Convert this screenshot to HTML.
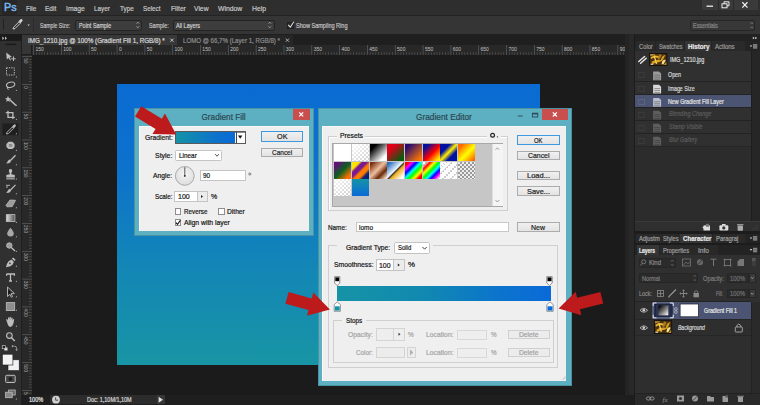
<!DOCTYPE html>
<html><head><meta charset="utf-8">
<style>
*{margin:0;padding:0;box-sizing:border-box}
html,body{width:760px;height:405px;overflow:hidden;background:#1b1b1b;font-family:"Liberation Sans",sans-serif;position:relative}
.a{position:absolute}
.t{position:absolute;white-space:nowrap;line-height:1;transform-origin:0 50%;-webkit-text-stroke:0.2px currentColor}
svg{position:absolute;overflow:visible}
</style></head><body>
<div class="a" style="left:0px;top:0px;width:760px;height:405px;background:#1b1b1b"></div>
<div class="a" style="left:0px;top:0px;width:760px;height:15px;background:#2e2e2e"></div>
<div class="a" style="left:0px;top:15px;width:760px;height:1px;background:#232323"></div>
<div class="a" style="left:1.5px;top:0px;width:15px;height:14.5px;background:#272727"></div>
<div class="t" style="left:4.00px;top:2.00px;font-size:11px;color:#78b6ec;transform:scaleX(0.974);-webkit-text-stroke:0.5px #78b6ec">Ps</div>
<div class="t" style="left:25.70px;top:5.00px;font-size:8px;color:#c9c9c9;transform:scaleX(0.799);">File</div>
<div class="t" style="left:45.40px;top:5.00px;font-size:8px;color:#c9c9c9;transform:scaleX(0.812);">Edit</div>
<div class="t" style="left:65.80px;top:5.00px;font-size:8px;color:#c9c9c9;transform:scaleX(0.846);">Image</div>
<div class="t" style="left:93.80px;top:5.00px;font-size:8px;color:#c9c9c9;transform:scaleX(0.790);">Layer</div>
<div class="t" style="left:119.50px;top:5.00px;font-size:8px;color:#c9c9c9;transform:scaleX(0.796);">Type</div>
<div class="t" style="left:142.90px;top:5.00px;font-size:8px;color:#c9c9c9;transform:scaleX(0.783);">Select</div>
<div class="t" style="left:170.50px;top:5.00px;font-size:8px;color:#c9c9c9;transform:scaleX(0.833);">Filter</div>
<div class="t" style="left:193.80px;top:5.00px;font-size:8px;color:#c9c9c9;transform:scaleX(0.843);">View</div>
<div class="t" style="left:218.20px;top:5.00px;font-size:8px;color:#c9c9c9;transform:scaleX(0.854);">Window</div>
<div class="t" style="left:252.00px;top:5.00px;font-size:8px;color:#c9c9c9;transform:scaleX(0.863);">Help</div>
<div class="a" style="left:702px;top:0px;width:16px;height:10px;background:#3a3a3a"></div>
<div class="a" style="left:718px;top:0px;width:14.5px;height:10px;background:#3a3a3a;border-left:1px solid #2a2a2a"></div>
<div class="a" style="left:732.5px;top:0px;width:25px;height:10px;background:#3a3a3a;border-left:1px solid #2a2a2a"></div>
<div class="a" style="left:0px;top:16px;width:760px;height:18px;background:#353535"></div>
<div class="a" style="left:3px;top:19px;width:1px;height:11px;background:#222"></div>
<div class="a" style="left:33px;top:18px;width:1px;height:14px;background:#2b2b2b"></div>
<div class="t" style="left:39.50px;top:22.00px;font-size:7px;color:#c4c4c4;transform:scaleX(0.732);">Sample Size:</div>
<div class="a" style="left:75px;top:19.5px;width:66.5px;height:11px;background:#3d3d3d;border:1px solid #242424;border-radius:2px"></div>
<div class="t" style="left:79.00px;top:22.00px;font-size:7px;color:#d0d0d0;transform:scaleX(0.776);">Point Sample</div>
<div class="t" style="left:148.50px;top:22.00px;font-size:7px;color:#c4c4c4;transform:scaleX(0.767);">Sample:</div>
<div class="a" style="left:172.5px;top:19.5px;width:102.5px;height:11px;background:#3d3d3d;border:1px solid #242424;border-radius:2px"></div>
<div class="t" style="left:176.00px;top:22.00px;font-size:7px;color:#d0d0d0;transform:scaleX(0.781);">All Layers</div>
<div class="a" style="left:287px;top:21.5px;width:7px;height:7px;background:#2a2a2a;border:1px solid #1f1f1f"></div>
<div class="t" style="left:296.00px;top:22.00px;font-size:7px;color:#c4c4c4;transform:scaleX(0.793);">Show Sampling Ring</div>
<svg width="760" height="405" style="left:0;top:0"><path d="M288.2 24.8 L290.3 27.2 L293.8 21.8" fill="none" stroke="#ddd" stroke-width="1.1"/><path d="M13 29 L13.6 27.2 L19 21.8 L20.4 23.2 L15 28.6 Z" fill="none" stroke="#d8d8d8" stroke-width="0.9"/><path d="M18.6 21.3 L20.3 19.6 Q21.5 18.6 22.3 19.5 Q23.1 20.4 22 21.5 L20.6 23 Z" fill="#d8d8d8"/><path d="M27.4 24.4 L29.8 24.4 L28.6 26 Z" fill="#ccc"/><path d="M136.6 23.6 L137.8 22.3 L139 23.6 M136.6 26.4 L137.8 27.7 L139 26.4" fill="none" stroke="#ccc" stroke-width="0.7"/><path d="M268.6 23.6 L269.8 22.3 L271 23.6 M268.6 26.4 L269.8 27.7 L271 26.4" fill="none" stroke="#ccc" stroke-width="0.7"/><path d="M706.5 6.2 H713" stroke="#eee" stroke-width="1.3"/><rect x="722" y="3.8" width="5" height="4" fill="none" stroke="#eee" stroke-width="1"/><path d="M724 3.8 V1.8 H729 V5.8 H727" fill="none" stroke="#eee" stroke-width="1"/><path d="M742.3 2.2 L747.5 7.6 M747.5 2.2 L742.3 7.6" stroke="#eee" stroke-width="1.3"/></svg>
<div class="a" style="left:690px;top:20.3px;width:65.3px;height:10.3px;background:#383838;border:1px solid #262626;border-radius:2px"></div>
<div class="t" style="left:692.60px;top:22.00px;font-size:7px;color:#8a8a8a;transform:scaleX(0.777);">Essentials</div>
<svg width="760" height="405" style="left:0;top:0"><path d="M750.6 23.8 L751.8 22.6 L753 23.8 M750.6 26.8 L751.8 28 L753 26.8" fill="none" stroke="#999" stroke-width="0.7"/></svg>
<div class="a" style="left:0px;top:34px;width:625px;height:11px;background:#1f1f1f"></div>
<div class="a" style="left:22px;top:34.6px;width:155px;height:10.6px;background:#383838"></div>
<div class="t" style="left:28.20px;top:38.00px;font-size:6.5px;color:#d8d8d8;transform:scaleX(0.965);">IMG_1210.jpg @ 100% (Gradient Fill 1, RGB/8) *</div>
<div class="a" style="left:177px;top:34.6px;width:116px;height:10.6px;background:#262626"></div>
<div class="t" style="left:183.00px;top:38.00px;font-size:6.5px;color:#8c8c8c;transform:scaleX(0.941);">LOMO @ 66,7% (Layer 1, RGB/8) *</div>
<svg width="760" height="405" style="left:0;top:0"><path d="M170.3 38.6 L173.5 41.8 M173.5 38.6 L170.3 41.8" stroke="#d0d0d0" stroke-width="0.9"/><path d="M285.8 38.6 L289 41.8 M289 38.6 L285.8 41.8" stroke="#c0c0c0" stroke-width="0.9"/></svg>
<div class="a" style="left:0px;top:34px;width:22px;height:371px;background:#303030"></div>
<div class="a" style="left:0px;top:34px;width:22px;height:6.7px;background:#1b1b1b"></div>
<div class="a" style="left:21px;top:40.7px;width:1px;height:364.3px;background:#1f1f1f"></div>
<svg width="22" height="405" style="left:0;top:0"><rect x="5.6" y="43.6" width="10.7" height="1.6" fill="#1c1c1c"/><path d="M2.3 36.5 L4.3 38.2 L2.3 39.9 Z M5 36.5 L7 38.2 L5 39.9 Z" fill="#bbb"/><path d="M6.2 52.5 L12 57 L9.6 57.4 L11 60 L10 60.5 L8.6 58 L6.8 59.6 Z" fill="#bdbdbd"/><path d="M13.5 56.5 V61 M11.3 58.8 H15.7" stroke="#bdbdbd" stroke-width="1"/><rect x="6.5" y="67.8" width="7.8" height="7.2" fill="none" stroke="#bdbdbd" stroke-width="1" stroke-dasharray="1.3 1.1"/><ellipse cx="10.6" cy="84.8" rx="4.2" ry="2.6" fill="none" stroke="#bdbdbd" stroke-width="1.1" transform="rotate(-15 10.6 84.8)"/><path d="M7.5 86.5 Q7 89 8.5 89.8" fill="none" stroke="#bdbdbd" stroke-width="1"/><path d="M9.5 99.5 L16 105.5" stroke="#bdbdbd" stroke-width="1.6"/><path d="M8 95.8 L8.8 98 L11 98.4 L9.3 99.8 L9.8 102 L8 100.8 L6.2 102 L6.7 99.8 L5 98.4 L7.2 98 Z" fill="#bdbdbd"/><path d="M8 110.7 V117.3 H14.8 M5.8 112.6 H12.9 V119" fill="none" stroke="#bdbdbd" stroke-width="1.3"/><rect x="2.2" y="123.3" width="16.3" height="11.9" fill="#1f1f1f" stroke="#2a2a2a" stroke-width="0.5"/><path d="M6.5 134 L7 132.3 L12.3 127 L13.6 128.3 L8.3 133.6 Z" fill="none" stroke="#bdbdbd" stroke-width="0.9"/><path d="M12 126.5 L13.6 124.9 Q14.8 123.9 15.6 124.8 Q16.4 125.7 15.3 126.8 L13.9 128.3 Z" fill="#bdbdbd"/><path d="M8.6 141.7 H12.4 L14.6 143.9 V146.9 L12.4 149.1 H8.6 L6.4 146.9 V143.9 Z" fill="#bdbdbd"/><rect x="8.8" y="144" width="3.4" height="2.8" fill="#8a8a8a"/><path d="M15.5 155.2 L10.5 160.5" stroke="#bdbdbd" stroke-width="1.3"/><path d="M10.8 160.2 Q9.8 159 8.4 160.2 Q7.6 161.5 6.2 163.6 Q9.2 163.5 10.2 162.4 Q11.3 161.3 10.8 160.2 Z" fill="#bdbdbd"/><path d="M9 169.5 Q10.5 168.5 12 169.5 Q12.6 171.5 11.3 173.2 L11.3 174.3 L14.8 175 L14.8 177.5 L6.3 177.5 L6.3 175 L9.7 174.3 L9.7 173.2 Q8.4 171.5 9 169.5 Z" fill="#bdbdbd"/><rect x="6.3" y="178.3" width="8.5" height="1.1" fill="#bdbdbd"/><path d="M6 185.3 H10 M6 187 H8" stroke="#bdbdbd" stroke-width="0.9"/><path d="M15.5 184.8 L10.5 190" stroke="#bdbdbd" stroke-width="1.2"/><path d="M10.8 189.7 Q9.8 188.5 8.4 189.7 Q7.6 191 6.2 193 Q9.2 193 10.2 191.9 Q11.3 190.8 10.8 189.7 Z" fill="#bdbdbd"/><path d="M6 205.3 L10 200 L15.5 200.3 L12.2 206.6 L7 206.8 Z" fill="#9c9c9c" stroke="#bdbdbd" stroke-width="0.8"/><defs><linearGradient id="tg" x1="0" x2="1"><stop offset="0" stop-color="#e0e0e0"/><stop offset="1" stop-color="#505050"/></linearGradient></defs><rect x="6.3" y="214.6" width="8.6" height="7" fill="url(#tg)" stroke="#bdbdbd" stroke-width="0.8"/><path d="M10.5 227.8 Q13.8 231.8 13.8 233.6 Q13.8 236.6 10.5 236.6 Q7.2 236.6 7.2 233.6 Q7.2 231.8 10.5 227.8 Z" fill="#a8a8a8"/><circle cx="9.3" cy="245.5" r="2.7" fill="#9c9c9c" stroke="#bdbdbd" stroke-width="0.9"/><path d="M11.3 247.5 L15 251" stroke="#bdbdbd" stroke-width="1.3"/><path d="M6 267.3 Q6.6 263.5 8.6 261.2 L11.6 259.6 L13.9 261.9 L12.3 264.9 Q10 266.9 6 267.3 Z" fill="#bdbdbd"/><circle cx="9.9" cy="263.4" r="0.8" fill="#333"/><path d="M11.9 258.4 L13.2 257.4 L15.6 259.8 L14.6 261.1 Z" fill="#bdbdbd"/><path d="M6.6 274 H14.4 V275.8 M6.6 274 V275.8 M10.5 274 V281 M9 281 H12" fill="none" stroke="#bdbdbd" stroke-width="1.3"/><path d="M7.5 287 L7.5 296.5 L9.8 294.3 L11.3 297.2 L12.6 296.6 L11.1 293.7 L14.4 293.5 Z" fill="#2e2e2e" stroke="#bdbdbd" stroke-width="0.9"/><path d="M8.5 290 L8.5 294.5 L10.5 292.5" fill="#111"/><rect x="6.3" y="302.6" width="8.4" height="8" fill="#8e8e8e" stroke="#bdbdbd" stroke-width="0.8"/><path d="M7 322 L6.2 319.7 Q6.3 318.8 7.3 319.3 L8 320.5 L8 317.8 Q8.6 316.9 9.2 317.8 L9.3 320 L9.6 317.2 Q10.3 316.4 10.9 317.3 L10.9 320 L11.4 317.8 Q12 317.1 12.6 317.9 L12.5 320.6 L13 319.2 Q13.8 318.6 14.2 319.4 L13.4 323.6 Q12.7 326.6 10.3 327 Q8.2 326.8 7 322 Z" fill="#bdbdbd"/><circle cx="9.4" cy="335.6" r="2.8" fill="#3a3a3a" stroke="#bdbdbd" stroke-width="1.1"/><path d="M11.5 337.7 L14.8 341" stroke="#bdbdbd" stroke-width="1.5"/><rect x="4.3" y="347.5" width="3.2" height="3" fill="#ddd"/><rect x="2.2" y="345.7" width="3.2" height="3" fill="#222" stroke="#ddd" stroke-width="0.6"/><path d="M12.3 346.2 H14.8 Q16.6 346.2 16.6 348.3 V350.2 M11.8 346.2 L13 345.2 M11.8 346.2 L13 347.2 M16.6 350.6 L15.6 349.4 M16.6 350.6 L17.6 349.4" fill="none" stroke="#bdbdbd" stroke-width="0.7"/><rect x="8" y="359.8" width="11.2" height="10.8" fill="#f2f2f2" stroke="#1a1a1a" stroke-width="0.6"/><rect x="2.3" y="354.2" width="10.6" height="10.8" fill="#f4f4f4" stroke="#1a1a1a" stroke-width="0.6"/><rect x="5.6" y="375.3" width="9.6" height="7.2" rx="1" fill="#444" stroke="#bdbdbd" stroke-width="1"/><circle cx="10.4" cy="378.9" r="1.9" fill="#1d1d1d"/><rect x="8.6" y="390" width="6.6" height="5" fill="#666" stroke="#bdbdbd" stroke-width="0.8"/><rect x="5.6" y="392.2" width="6.6" height="5.5" fill="#888" stroke="#bdbdbd" stroke-width="0.8"/><path d="M15.5 77.5 L17 76.0 L17 77.5 Z" fill="#aaa"/><path d="M15.5 91 L17 89.5 L17 91 Z" fill="#aaa"/><path d="M15.5 106 L17 104.5 L17 106 Z" fill="#aaa"/><path d="M15.5 120 L17 118.5 L17 120 Z" fill="#aaa"/><path d="M15.5 134.2 L17 132.7 L17 134.2 Z" fill="#aaa"/><path d="M15.5 151 L17 149.5 L17 151 Z" fill="#aaa"/><path d="M15.5 165.3 L17 163.8 L17 165.3 Z" fill="#aaa"/><path d="M15.5 179.4 L17 177.9 L17 179.4 Z" fill="#aaa"/><path d="M15.5 194.2 L17 192.7 L17 194.2 Z" fill="#aaa"/><path d="M15.5 208.3 L17 206.8 L17 208.3 Z" fill="#aaa"/><path d="M15.5 223 L17 221.5 L17 223 Z" fill="#aaa"/><path d="M15.5 237.2 L17 235.7 L17 237.2 Z" fill="#aaa"/><path d="M15.5 252 L17 250.5 L17 252 Z" fill="#aaa"/><path d="M15.5 266.8 L17 265.3 L17 266.8 Z" fill="#aaa"/><path d="M15.5 282.1 L17 280.6 L17 282.1 Z" fill="#aaa"/><path d="M15.5 297.2 L17 295.7 L17 297.2 Z" fill="#aaa"/><path d="M15.5 310.8 L17 309.3 L17 310.8 Z" fill="#aaa"/><path d="M15.5 326.8 L17 325.3 L17 326.8 Z" fill="#aaa"/><path d="M15.5 399.5 L17 398.0 L17 399.5 Z" fill="#aaa"/></svg>
<div class="a" style="left:32px;top:45px;width:593px;height:10px;background:#282828"></div>
<div class="a" style="left:22px;top:45px;width:10px;height:10px;background:#363636;border-right:1px solid #1e1e1e;border-bottom:1px solid #1e1e1e"></div>
<div class="a" style="left:22px;top:55px;width:10px;height:340px;background:#282828"></div>
<svg width="760" height="405" style="left:0;top:0"><defs><clipPath id="hrc"><rect x="32" y="45" width="593" height="10"/></clipPath><clipPath id="vrc"><rect x="22" y="55" width="10" height="340"/></clipPath></defs><g clip-path="url(#hrc)"><rect x="30.46" y="52.2" width="0.7" height="2.6" fill="#555"/><rect x="33.24" y="45" width="0.7" height="10" fill="#5e5e5e"/><rect x="36.02" y="52.2" width="0.7" height="2.6" fill="#555"/><rect x="38.80" y="52.2" width="0.7" height="2.6" fill="#555"/><rect x="41.59" y="52.2" width="0.7" height="2.6" fill="#555"/><rect x="44.37" y="52.2" width="0.7" height="2.6" fill="#555"/><rect x="47.15" y="52.2" width="0.7" height="2.6" fill="#555"/><rect x="49.93" y="52.2" width="0.7" height="2.6" fill="#555"/><rect x="52.71" y="52.2" width="0.7" height="2.6" fill="#555"/><rect x="55.50" y="52.2" width="0.7" height="2.6" fill="#555"/><rect x="58.28" y="52.2" width="0.7" height="2.6" fill="#555"/><text x="35.44" y="51" font-size="5" fill="#c4c4c4" font-family="Liberation Sans">150</text><rect x="61.06" y="45" width="0.7" height="10" fill="#5e5e5e"/><rect x="63.84" y="52.2" width="0.7" height="2.6" fill="#555"/><rect x="66.62" y="52.2" width="0.7" height="2.6" fill="#555"/><rect x="69.41" y="52.2" width="0.7" height="2.6" fill="#555"/><rect x="72.19" y="52.2" width="0.7" height="2.6" fill="#555"/><rect x="74.97" y="52.2" width="0.7" height="2.6" fill="#555"/><rect x="77.75" y="52.2" width="0.7" height="2.6" fill="#555"/><rect x="80.53" y="52.2" width="0.7" height="2.6" fill="#555"/><rect x="83.32" y="52.2" width="0.7" height="2.6" fill="#555"/><rect x="86.10" y="52.2" width="0.7" height="2.6" fill="#555"/><text x="63.26" y="51" font-size="5" fill="#c4c4c4" font-family="Liberation Sans">100</text><rect x="88.88" y="45" width="0.7" height="10" fill="#5e5e5e"/><rect x="91.66" y="52.2" width="0.7" height="2.6" fill="#555"/><rect x="94.44" y="52.2" width="0.7" height="2.6" fill="#555"/><rect x="97.23" y="52.2" width="0.7" height="2.6" fill="#555"/><rect x="100.01" y="52.2" width="0.7" height="2.6" fill="#555"/><rect x="102.79" y="52.2" width="0.7" height="2.6" fill="#555"/><rect x="105.57" y="52.2" width="0.7" height="2.6" fill="#555"/><rect x="108.35" y="52.2" width="0.7" height="2.6" fill="#555"/><rect x="111.14" y="52.2" width="0.7" height="2.6" fill="#555"/><rect x="113.92" y="52.2" width="0.7" height="2.6" fill="#555"/><text x="91.08" y="51" font-size="5" fill="#c4c4c4" font-family="Liberation Sans">50</text><rect x="116.70" y="45" width="0.7" height="10" fill="#5e5e5e"/><rect x="119.48" y="52.2" width="0.7" height="2.6" fill="#555"/><rect x="122.26" y="52.2" width="0.7" height="2.6" fill="#555"/><rect x="125.05" y="52.2" width="0.7" height="2.6" fill="#555"/><rect x="127.83" y="52.2" width="0.7" height="2.6" fill="#555"/><rect x="130.61" y="52.2" width="0.7" height="2.6" fill="#555"/><rect x="133.39" y="52.2" width="0.7" height="2.6" fill="#555"/><rect x="136.17" y="52.2" width="0.7" height="2.6" fill="#555"/><rect x="138.96" y="52.2" width="0.7" height="2.6" fill="#555"/><rect x="141.74" y="52.2" width="0.7" height="2.6" fill="#555"/><text x="118.90" y="51" font-size="5" fill="#c4c4c4" font-family="Liberation Sans">0</text><rect x="144.52" y="45" width="0.7" height="10" fill="#5e5e5e"/><rect x="147.30" y="52.2" width="0.7" height="2.6" fill="#555"/><rect x="150.08" y="52.2" width="0.7" height="2.6" fill="#555"/><rect x="152.87" y="52.2" width="0.7" height="2.6" fill="#555"/><rect x="155.65" y="52.2" width="0.7" height="2.6" fill="#555"/><rect x="158.43" y="52.2" width="0.7" height="2.6" fill="#555"/><rect x="161.21" y="52.2" width="0.7" height="2.6" fill="#555"/><rect x="163.99" y="52.2" width="0.7" height="2.6" fill="#555"/><rect x="166.78" y="52.2" width="0.7" height="2.6" fill="#555"/><rect x="169.56" y="52.2" width="0.7" height="2.6" fill="#555"/><text x="146.72" y="51" font-size="5" fill="#c4c4c4" font-family="Liberation Sans">50</text><rect x="172.34" y="45" width="0.7" height="10" fill="#5e5e5e"/><rect x="175.12" y="52.2" width="0.7" height="2.6" fill="#555"/><rect x="177.90" y="52.2" width="0.7" height="2.6" fill="#555"/><rect x="180.69" y="52.2" width="0.7" height="2.6" fill="#555"/><rect x="183.47" y="52.2" width="0.7" height="2.6" fill="#555"/><rect x="186.25" y="52.2" width="0.7" height="2.6" fill="#555"/><rect x="189.03" y="52.2" width="0.7" height="2.6" fill="#555"/><rect x="191.81" y="52.2" width="0.7" height="2.6" fill="#555"/><rect x="194.60" y="52.2" width="0.7" height="2.6" fill="#555"/><rect x="197.38" y="52.2" width="0.7" height="2.6" fill="#555"/><text x="174.54" y="51" font-size="5" fill="#c4c4c4" font-family="Liberation Sans">100</text><rect x="200.16" y="45" width="0.7" height="10" fill="#5e5e5e"/><rect x="202.94" y="52.2" width="0.7" height="2.6" fill="#555"/><rect x="205.72" y="52.2" width="0.7" height="2.6" fill="#555"/><rect x="208.51" y="52.2" width="0.7" height="2.6" fill="#555"/><rect x="211.29" y="52.2" width="0.7" height="2.6" fill="#555"/><rect x="214.07" y="52.2" width="0.7" height="2.6" fill="#555"/><rect x="216.85" y="52.2" width="0.7" height="2.6" fill="#555"/><rect x="219.63" y="52.2" width="0.7" height="2.6" fill="#555"/><rect x="222.42" y="52.2" width="0.7" height="2.6" fill="#555"/><rect x="225.20" y="52.2" width="0.7" height="2.6" fill="#555"/><text x="202.36" y="51" font-size="5" fill="#c4c4c4" font-family="Liberation Sans">150</text><rect x="227.98" y="45" width="0.7" height="10" fill="#5e5e5e"/><rect x="230.76" y="52.2" width="0.7" height="2.6" fill="#555"/><rect x="233.54" y="52.2" width="0.7" height="2.6" fill="#555"/><rect x="236.33" y="52.2" width="0.7" height="2.6" fill="#555"/><rect x="239.11" y="52.2" width="0.7" height="2.6" fill="#555"/><rect x="241.89" y="52.2" width="0.7" height="2.6" fill="#555"/><rect x="244.67" y="52.2" width="0.7" height="2.6" fill="#555"/><rect x="247.45" y="52.2" width="0.7" height="2.6" fill="#555"/><rect x="250.24" y="52.2" width="0.7" height="2.6" fill="#555"/><rect x="253.02" y="52.2" width="0.7" height="2.6" fill="#555"/><text x="230.18" y="51" font-size="5" fill="#c4c4c4" font-family="Liberation Sans">200</text><rect x="255.80" y="45" width="0.7" height="10" fill="#5e5e5e"/><rect x="258.58" y="52.2" width="0.7" height="2.6" fill="#555"/><rect x="261.36" y="52.2" width="0.7" height="2.6" fill="#555"/><rect x="264.15" y="52.2" width="0.7" height="2.6" fill="#555"/><rect x="266.93" y="52.2" width="0.7" height="2.6" fill="#555"/><rect x="269.71" y="52.2" width="0.7" height="2.6" fill="#555"/><rect x="272.49" y="52.2" width="0.7" height="2.6" fill="#555"/><rect x="275.27" y="52.2" width="0.7" height="2.6" fill="#555"/><rect x="278.06" y="52.2" width="0.7" height="2.6" fill="#555"/><rect x="280.84" y="52.2" width="0.7" height="2.6" fill="#555"/><text x="258.00" y="51" font-size="5" fill="#c4c4c4" font-family="Liberation Sans">250</text><rect x="283.62" y="45" width="0.7" height="10" fill="#5e5e5e"/><rect x="286.40" y="52.2" width="0.7" height="2.6" fill="#555"/><rect x="289.18" y="52.2" width="0.7" height="2.6" fill="#555"/><rect x="291.97" y="52.2" width="0.7" height="2.6" fill="#555"/><rect x="294.75" y="52.2" width="0.7" height="2.6" fill="#555"/><rect x="297.53" y="52.2" width="0.7" height="2.6" fill="#555"/><rect x="300.31" y="52.2" width="0.7" height="2.6" fill="#555"/><rect x="303.09" y="52.2" width="0.7" height="2.6" fill="#555"/><rect x="305.88" y="52.2" width="0.7" height="2.6" fill="#555"/><rect x="308.66" y="52.2" width="0.7" height="2.6" fill="#555"/><text x="285.82" y="51" font-size="5" fill="#c4c4c4" font-family="Liberation Sans">300</text><rect x="311.44" y="45" width="0.7" height="10" fill="#5e5e5e"/><rect x="314.22" y="52.2" width="0.7" height="2.6" fill="#555"/><rect x="317.00" y="52.2" width="0.7" height="2.6" fill="#555"/><rect x="319.79" y="52.2" width="0.7" height="2.6" fill="#555"/><rect x="322.57" y="52.2" width="0.7" height="2.6" fill="#555"/><rect x="325.35" y="52.2" width="0.7" height="2.6" fill="#555"/><rect x="328.13" y="52.2" width="0.7" height="2.6" fill="#555"/><rect x="330.91" y="52.2" width="0.7" height="2.6" fill="#555"/><rect x="333.70" y="52.2" width="0.7" height="2.6" fill="#555"/><rect x="336.48" y="52.2" width="0.7" height="2.6" fill="#555"/><text x="313.64" y="51" font-size="5" fill="#c4c4c4" font-family="Liberation Sans">350</text><rect x="339.26" y="45" width="0.7" height="10" fill="#5e5e5e"/><rect x="342.04" y="52.2" width="0.7" height="2.6" fill="#555"/><rect x="344.82" y="52.2" width="0.7" height="2.6" fill="#555"/><rect x="347.61" y="52.2" width="0.7" height="2.6" fill="#555"/><rect x="350.39" y="52.2" width="0.7" height="2.6" fill="#555"/><rect x="353.17" y="52.2" width="0.7" height="2.6" fill="#555"/><rect x="355.95" y="52.2" width="0.7" height="2.6" fill="#555"/><rect x="358.73" y="52.2" width="0.7" height="2.6" fill="#555"/><rect x="361.52" y="52.2" width="0.7" height="2.6" fill="#555"/><rect x="364.30" y="52.2" width="0.7" height="2.6" fill="#555"/><text x="341.46" y="51" font-size="5" fill="#c4c4c4" font-family="Liberation Sans">400</text><rect x="367.08" y="45" width="0.7" height="10" fill="#5e5e5e"/><rect x="369.86" y="52.2" width="0.7" height="2.6" fill="#555"/><rect x="372.64" y="52.2" width="0.7" height="2.6" fill="#555"/><rect x="375.43" y="52.2" width="0.7" height="2.6" fill="#555"/><rect x="378.21" y="52.2" width="0.7" height="2.6" fill="#555"/><rect x="380.99" y="52.2" width="0.7" height="2.6" fill="#555"/><rect x="383.77" y="52.2" width="0.7" height="2.6" fill="#555"/><rect x="386.55" y="52.2" width="0.7" height="2.6" fill="#555"/><rect x="389.34" y="52.2" width="0.7" height="2.6" fill="#555"/><rect x="392.12" y="52.2" width="0.7" height="2.6" fill="#555"/><text x="369.28" y="51" font-size="5" fill="#c4c4c4" font-family="Liberation Sans">450</text><rect x="394.90" y="45" width="0.7" height="10" fill="#5e5e5e"/><rect x="397.68" y="52.2" width="0.7" height="2.6" fill="#555"/><rect x="400.46" y="52.2" width="0.7" height="2.6" fill="#555"/><rect x="403.25" y="52.2" width="0.7" height="2.6" fill="#555"/><rect x="406.03" y="52.2" width="0.7" height="2.6" fill="#555"/><rect x="408.81" y="52.2" width="0.7" height="2.6" fill="#555"/><rect x="411.59" y="52.2" width="0.7" height="2.6" fill="#555"/><rect x="414.37" y="52.2" width="0.7" height="2.6" fill="#555"/><rect x="417.16" y="52.2" width="0.7" height="2.6" fill="#555"/><rect x="419.94" y="52.2" width="0.7" height="2.6" fill="#555"/><text x="397.10" y="51" font-size="5" fill="#c4c4c4" font-family="Liberation Sans">500</text><rect x="422.72" y="45" width="0.7" height="10" fill="#5e5e5e"/><rect x="425.50" y="52.2" width="0.7" height="2.6" fill="#555"/><rect x="428.28" y="52.2" width="0.7" height="2.6" fill="#555"/><rect x="431.07" y="52.2" width="0.7" height="2.6" fill="#555"/><rect x="433.85" y="52.2" width="0.7" height="2.6" fill="#555"/><rect x="436.63" y="52.2" width="0.7" height="2.6" fill="#555"/><rect x="439.41" y="52.2" width="0.7" height="2.6" fill="#555"/><rect x="442.19" y="52.2" width="0.7" height="2.6" fill="#555"/><rect x="444.98" y="52.2" width="0.7" height="2.6" fill="#555"/><rect x="447.76" y="52.2" width="0.7" height="2.6" fill="#555"/><text x="424.92" y="51" font-size="5" fill="#c4c4c4" font-family="Liberation Sans">550</text><rect x="450.54" y="45" width="0.7" height="10" fill="#5e5e5e"/><rect x="453.32" y="52.2" width="0.7" height="2.6" fill="#555"/><rect x="456.10" y="52.2" width="0.7" height="2.6" fill="#555"/><rect x="458.89" y="52.2" width="0.7" height="2.6" fill="#555"/><rect x="461.67" y="52.2" width="0.7" height="2.6" fill="#555"/><rect x="464.45" y="52.2" width="0.7" height="2.6" fill="#555"/><rect x="467.23" y="52.2" width="0.7" height="2.6" fill="#555"/><rect x="470.01" y="52.2" width="0.7" height="2.6" fill="#555"/><rect x="472.80" y="52.2" width="0.7" height="2.6" fill="#555"/><rect x="475.58" y="52.2" width="0.7" height="2.6" fill="#555"/><text x="452.74" y="51" font-size="5" fill="#c4c4c4" font-family="Liberation Sans">600</text><rect x="478.36" y="45" width="0.7" height="10" fill="#5e5e5e"/><rect x="481.14" y="52.2" width="0.7" height="2.6" fill="#555"/><rect x="483.92" y="52.2" width="0.7" height="2.6" fill="#555"/><rect x="486.71" y="52.2" width="0.7" height="2.6" fill="#555"/><rect x="489.49" y="52.2" width="0.7" height="2.6" fill="#555"/><rect x="492.27" y="52.2" width="0.7" height="2.6" fill="#555"/><rect x="495.05" y="52.2" width="0.7" height="2.6" fill="#555"/><rect x="497.83" y="52.2" width="0.7" height="2.6" fill="#555"/><rect x="500.62" y="52.2" width="0.7" height="2.6" fill="#555"/><rect x="503.40" y="52.2" width="0.7" height="2.6" fill="#555"/><text x="480.56" y="51" font-size="5" fill="#c4c4c4" font-family="Liberation Sans">650</text><rect x="506.18" y="45" width="0.7" height="10" fill="#5e5e5e"/><rect x="508.96" y="52.2" width="0.7" height="2.6" fill="#555"/><rect x="511.74" y="52.2" width="0.7" height="2.6" fill="#555"/><rect x="514.53" y="52.2" width="0.7" height="2.6" fill="#555"/><rect x="517.31" y="52.2" width="0.7" height="2.6" fill="#555"/><rect x="520.09" y="52.2" width="0.7" height="2.6" fill="#555"/><rect x="522.87" y="52.2" width="0.7" height="2.6" fill="#555"/><rect x="525.65" y="52.2" width="0.7" height="2.6" fill="#555"/><rect x="528.44" y="52.2" width="0.7" height="2.6" fill="#555"/><rect x="531.22" y="52.2" width="0.7" height="2.6" fill="#555"/><text x="508.38" y="51" font-size="5" fill="#c4c4c4" font-family="Liberation Sans">700</text><rect x="534.00" y="45" width="0.7" height="10" fill="#5e5e5e"/><rect x="536.78" y="52.2" width="0.7" height="2.6" fill="#555"/><rect x="539.56" y="52.2" width="0.7" height="2.6" fill="#555"/><rect x="542.35" y="52.2" width="0.7" height="2.6" fill="#555"/><rect x="545.13" y="52.2" width="0.7" height="2.6" fill="#555"/><rect x="547.91" y="52.2" width="0.7" height="2.6" fill="#555"/><rect x="550.69" y="52.2" width="0.7" height="2.6" fill="#555"/><rect x="553.47" y="52.2" width="0.7" height="2.6" fill="#555"/><rect x="556.26" y="52.2" width="0.7" height="2.6" fill="#555"/><rect x="559.04" y="52.2" width="0.7" height="2.6" fill="#555"/><text x="536.20" y="51" font-size="5" fill="#c4c4c4" font-family="Liberation Sans">750</text><rect x="561.82" y="45" width="0.7" height="10" fill="#5e5e5e"/><rect x="564.60" y="52.2" width="0.7" height="2.6" fill="#555"/><rect x="567.38" y="52.2" width="0.7" height="2.6" fill="#555"/><rect x="570.17" y="52.2" width="0.7" height="2.6" fill="#555"/><rect x="572.95" y="52.2" width="0.7" height="2.6" fill="#555"/><rect x="575.73" y="52.2" width="0.7" height="2.6" fill="#555"/><rect x="578.51" y="52.2" width="0.7" height="2.6" fill="#555"/><rect x="581.29" y="52.2" width="0.7" height="2.6" fill="#555"/><rect x="584.08" y="52.2" width="0.7" height="2.6" fill="#555"/><rect x="586.86" y="52.2" width="0.7" height="2.6" fill="#555"/><text x="564.02" y="51" font-size="5" fill="#c4c4c4" font-family="Liberation Sans">800</text><rect x="589.64" y="45" width="0.7" height="10" fill="#5e5e5e"/><rect x="592.42" y="52.2" width="0.7" height="2.6" fill="#555"/><rect x="595.20" y="52.2" width="0.7" height="2.6" fill="#555"/><rect x="597.99" y="52.2" width="0.7" height="2.6" fill="#555"/><rect x="600.77" y="52.2" width="0.7" height="2.6" fill="#555"/><rect x="603.55" y="52.2" width="0.7" height="2.6" fill="#555"/><rect x="606.33" y="52.2" width="0.7" height="2.6" fill="#555"/><rect x="609.11" y="52.2" width="0.7" height="2.6" fill="#555"/><rect x="611.90" y="52.2" width="0.7" height="2.6" fill="#555"/><rect x="614.68" y="52.2" width="0.7" height="2.6" fill="#555"/><text x="591.84" y="51" font-size="5" fill="#c4c4c4" font-family="Liberation Sans">850</text><rect x="617.46" y="45" width="0.7" height="10" fill="#5e5e5e"/><rect x="620.24" y="52.2" width="0.7" height="2.6" fill="#555"/><rect x="623.02" y="52.2" width="0.7" height="2.6" fill="#555"/><rect x="625.81" y="52.2" width="0.7" height="2.6" fill="#555"/><text x="619.66" y="51" font-size="5" fill="#c4c4c4" font-family="Liberation Sans">900</text></g><g clip-path="url(#vrc)"><rect x="22" y="56.18" width="10" height="0.7" fill="#5e5e5e"/><rect x="29" y="58.96" width="2.6" height="0.7" fill="#555"/><rect x="29" y="61.74" width="2.6" height="0.7" fill="#555"/><rect x="29" y="64.53" width="2.6" height="0.7" fill="#555"/><rect x="29" y="67.31" width="2.6" height="0.7" fill="#555"/><rect x="29" y="70.09" width="2.6" height="0.7" fill="#555"/><rect x="29" y="72.87" width="2.6" height="0.7" fill="#555"/><rect x="29" y="75.65" width="2.6" height="0.7" fill="#555"/><rect x="29" y="78.44" width="2.6" height="0.7" fill="#555"/><rect x="29" y="81.22" width="2.6" height="0.7" fill="#555"/><text transform="translate(24.2 58.18) rotate(90)" font-size="4.8" fill="#a8a8a8" font-family="Liberation Sans">50</text><rect x="22" y="84.00" width="10" height="0.7" fill="#5e5e5e"/><rect x="29" y="86.78" width="2.6" height="0.7" fill="#555"/><rect x="29" y="89.56" width="2.6" height="0.7" fill="#555"/><rect x="29" y="92.35" width="2.6" height="0.7" fill="#555"/><rect x="29" y="95.13" width="2.6" height="0.7" fill="#555"/><rect x="29" y="97.91" width="2.6" height="0.7" fill="#555"/><rect x="29" y="100.69" width="2.6" height="0.7" fill="#555"/><rect x="29" y="103.47" width="2.6" height="0.7" fill="#555"/><rect x="29" y="106.26" width="2.6" height="0.7" fill="#555"/><rect x="29" y="109.04" width="2.6" height="0.7" fill="#555"/><text transform="translate(24.2 86.00) rotate(90)" font-size="4.8" fill="#a8a8a8" font-family="Liberation Sans">0</text><rect x="22" y="111.82" width="10" height="0.7" fill="#5e5e5e"/><rect x="29" y="114.60" width="2.6" height="0.7" fill="#555"/><rect x="29" y="117.38" width="2.6" height="0.7" fill="#555"/><rect x="29" y="120.17" width="2.6" height="0.7" fill="#555"/><rect x="29" y="122.95" width="2.6" height="0.7" fill="#555"/><rect x="29" y="125.73" width="2.6" height="0.7" fill="#555"/><rect x="29" y="128.51" width="2.6" height="0.7" fill="#555"/><rect x="29" y="131.29" width="2.6" height="0.7" fill="#555"/><rect x="29" y="134.08" width="2.6" height="0.7" fill="#555"/><rect x="29" y="136.86" width="2.6" height="0.7" fill="#555"/><text transform="translate(24.2 113.82) rotate(90)" font-size="4.8" fill="#a8a8a8" font-family="Liberation Sans">50</text><rect x="22" y="139.64" width="10" height="0.7" fill="#5e5e5e"/><rect x="29" y="142.42" width="2.6" height="0.7" fill="#555"/><rect x="29" y="145.20" width="2.6" height="0.7" fill="#555"/><rect x="29" y="147.99" width="2.6" height="0.7" fill="#555"/><rect x="29" y="150.77" width="2.6" height="0.7" fill="#555"/><rect x="29" y="153.55" width="2.6" height="0.7" fill="#555"/><rect x="29" y="156.33" width="2.6" height="0.7" fill="#555"/><rect x="29" y="159.11" width="2.6" height="0.7" fill="#555"/><rect x="29" y="161.90" width="2.6" height="0.7" fill="#555"/><rect x="29" y="164.68" width="2.6" height="0.7" fill="#555"/><text transform="translate(24.2 141.64) rotate(90)" font-size="4.8" fill="#a8a8a8" font-family="Liberation Sans">100</text><rect x="22" y="167.46" width="10" height="0.7" fill="#5e5e5e"/><rect x="29" y="170.24" width="2.6" height="0.7" fill="#555"/><rect x="29" y="173.02" width="2.6" height="0.7" fill="#555"/><rect x="29" y="175.81" width="2.6" height="0.7" fill="#555"/><rect x="29" y="178.59" width="2.6" height="0.7" fill="#555"/><rect x="29" y="181.37" width="2.6" height="0.7" fill="#555"/><rect x="29" y="184.15" width="2.6" height="0.7" fill="#555"/><rect x="29" y="186.93" width="2.6" height="0.7" fill="#555"/><rect x="29" y="189.72" width="2.6" height="0.7" fill="#555"/><rect x="29" y="192.50" width="2.6" height="0.7" fill="#555"/><text transform="translate(24.2 169.46) rotate(90)" font-size="4.8" fill="#a8a8a8" font-family="Liberation Sans">150</text><rect x="22" y="195.28" width="10" height="0.7" fill="#5e5e5e"/><rect x="29" y="198.06" width="2.6" height="0.7" fill="#555"/><rect x="29" y="200.84" width="2.6" height="0.7" fill="#555"/><rect x="29" y="203.63" width="2.6" height="0.7" fill="#555"/><rect x="29" y="206.41" width="2.6" height="0.7" fill="#555"/><rect x="29" y="209.19" width="2.6" height="0.7" fill="#555"/><rect x="29" y="211.97" width="2.6" height="0.7" fill="#555"/><rect x="29" y="214.75" width="2.6" height="0.7" fill="#555"/><rect x="29" y="217.54" width="2.6" height="0.7" fill="#555"/><rect x="29" y="220.32" width="2.6" height="0.7" fill="#555"/><text transform="translate(24.2 197.28) rotate(90)" font-size="4.8" fill="#a8a8a8" font-family="Liberation Sans">200</text><rect x="22" y="223.10" width="10" height="0.7" fill="#5e5e5e"/><rect x="29" y="225.88" width="2.6" height="0.7" fill="#555"/><rect x="29" y="228.66" width="2.6" height="0.7" fill="#555"/><rect x="29" y="231.45" width="2.6" height="0.7" fill="#555"/><rect x="29" y="234.23" width="2.6" height="0.7" fill="#555"/><rect x="29" y="237.01" width="2.6" height="0.7" fill="#555"/><rect x="29" y="239.79" width="2.6" height="0.7" fill="#555"/><rect x="29" y="242.57" width="2.6" height="0.7" fill="#555"/><rect x="29" y="245.36" width="2.6" height="0.7" fill="#555"/><rect x="29" y="248.14" width="2.6" height="0.7" fill="#555"/><text transform="translate(24.2 225.10) rotate(90)" font-size="4.8" fill="#a8a8a8" font-family="Liberation Sans">250</text><rect x="22" y="250.92" width="10" height="0.7" fill="#5e5e5e"/><rect x="29" y="253.70" width="2.6" height="0.7" fill="#555"/><rect x="29" y="256.48" width="2.6" height="0.7" fill="#555"/><rect x="29" y="259.27" width="2.6" height="0.7" fill="#555"/><rect x="29" y="262.05" width="2.6" height="0.7" fill="#555"/><rect x="29" y="264.83" width="2.6" height="0.7" fill="#555"/><rect x="29" y="267.61" width="2.6" height="0.7" fill="#555"/><rect x="29" y="270.39" width="2.6" height="0.7" fill="#555"/><rect x="29" y="273.18" width="2.6" height="0.7" fill="#555"/><rect x="29" y="275.96" width="2.6" height="0.7" fill="#555"/><text transform="translate(24.2 252.92) rotate(90)" font-size="4.8" fill="#a8a8a8" font-family="Liberation Sans">300</text><rect x="22" y="278.74" width="10" height="0.7" fill="#5e5e5e"/><rect x="29" y="281.52" width="2.6" height="0.7" fill="#555"/><rect x="29" y="284.30" width="2.6" height="0.7" fill="#555"/><rect x="29" y="287.09" width="2.6" height="0.7" fill="#555"/><rect x="29" y="289.87" width="2.6" height="0.7" fill="#555"/><rect x="29" y="292.65" width="2.6" height="0.7" fill="#555"/><rect x="29" y="295.43" width="2.6" height="0.7" fill="#555"/><rect x="29" y="298.21" width="2.6" height="0.7" fill="#555"/><rect x="29" y="301.00" width="2.6" height="0.7" fill="#555"/><rect x="29" y="303.78" width="2.6" height="0.7" fill="#555"/><text transform="translate(24.2 280.74) rotate(90)" font-size="4.8" fill="#a8a8a8" font-family="Liberation Sans">350</text><rect x="22" y="306.56" width="10" height="0.7" fill="#5e5e5e"/><rect x="29" y="309.34" width="2.6" height="0.7" fill="#555"/><rect x="29" y="312.12" width="2.6" height="0.7" fill="#555"/><rect x="29" y="314.91" width="2.6" height="0.7" fill="#555"/><rect x="29" y="317.69" width="2.6" height="0.7" fill="#555"/><rect x="29" y="320.47" width="2.6" height="0.7" fill="#555"/><rect x="29" y="323.25" width="2.6" height="0.7" fill="#555"/><rect x="29" y="326.03" width="2.6" height="0.7" fill="#555"/><rect x="29" y="328.82" width="2.6" height="0.7" fill="#555"/><rect x="29" y="331.60" width="2.6" height="0.7" fill="#555"/><text transform="translate(24.2 308.56) rotate(90)" font-size="4.8" fill="#a8a8a8" font-family="Liberation Sans">400</text><rect x="22" y="334.38" width="10" height="0.7" fill="#5e5e5e"/><rect x="29" y="337.16" width="2.6" height="0.7" fill="#555"/><rect x="29" y="339.94" width="2.6" height="0.7" fill="#555"/><rect x="29" y="342.73" width="2.6" height="0.7" fill="#555"/><rect x="29" y="345.51" width="2.6" height="0.7" fill="#555"/><rect x="29" y="348.29" width="2.6" height="0.7" fill="#555"/><rect x="29" y="351.07" width="2.6" height="0.7" fill="#555"/><rect x="29" y="353.85" width="2.6" height="0.7" fill="#555"/><rect x="29" y="356.64" width="2.6" height="0.7" fill="#555"/><rect x="29" y="359.42" width="2.6" height="0.7" fill="#555"/><text transform="translate(24.2 336.38) rotate(90)" font-size="4.8" fill="#a8a8a8" font-family="Liberation Sans">450</text><rect x="22" y="362.20" width="10" height="0.7" fill="#5e5e5e"/><rect x="29" y="364.98" width="2.6" height="0.7" fill="#555"/><rect x="29" y="367.76" width="2.6" height="0.7" fill="#555"/><rect x="29" y="370.55" width="2.6" height="0.7" fill="#555"/><rect x="29" y="373.33" width="2.6" height="0.7" fill="#555"/><rect x="29" y="376.11" width="2.6" height="0.7" fill="#555"/><rect x="29" y="378.89" width="2.6" height="0.7" fill="#555"/><rect x="29" y="381.67" width="2.6" height="0.7" fill="#555"/><rect x="29" y="384.46" width="2.6" height="0.7" fill="#555"/><rect x="29" y="387.24" width="2.6" height="0.7" fill="#555"/><text transform="translate(24.2 364.20) rotate(90)" font-size="4.8" fill="#a8a8a8" font-family="Liberation Sans">500</text><rect x="22" y="390.02" width="10" height="0.7" fill="#5e5e5e"/><rect x="29" y="392.80" width="2.6" height="0.7" fill="#555"/><text transform="translate(24.2 392.02) rotate(90)" font-size="4.8" fill="#a8a8a8" font-family="Liberation Sans">550</text></g></svg>
<div class="a" style="left:624.5px;top:34px;width:9.5px;height:371px;background:#242424"></div>
<div class="a" style="left:629px;top:34px;width:5px;height:371px;background:#282828"></div>
<div class="a" style="left:634px;top:34px;width:126px;height:371px;background:#222"></div>
<div class="a" style="left:634px;top:34px;width:1px;height:371px;background:#1c1c1c"></div>
<svg width="760" height="405" style="left:0;top:0"><path d="M752.8 36.7 L754.8 38 L752.8 39.3 Z M755.2 36.7 L757.2 38 L755.2 39.3 Z" fill="#ccc"/></svg>
<div class="a" style="left:635px;top:41px;width:125px;height:10px;background:#242424"></div>
<div class="a" style="left:635.8px;top:41px;width:19.5px;height:9.8px;background:#2a2a2a"></div>
<div class="a" style="left:656.2px;top:41px;width:28px;height:9.8px;background:#2a2a2a"></div>
<div class="a" style="left:685.1px;top:41px;width:26px;height:10px;background:#353535"></div>
<div class="a" style="left:712px;top:41px;width:33px;height:9.8px;background:#2a2a2a"></div>
<div class="t" style="left:638.90px;top:44.00px;font-size:6.5px;color:#9b9b9b;transform:scaleX(0.888);">Color</div>
<div class="t" style="left:658.90px;top:44.00px;font-size:6.5px;color:#9b9b9b;transform:scaleX(0.834);">Swatches</div>
<div class="t" style="left:688.00px;top:44.00px;font-size:6.5px;color:#e6e6e6;transform:scaleX(0.960);font-weight:bold;">History</div>
<div class="t" style="left:715.40px;top:44.00px;font-size:6.5px;color:#9b9b9b;transform:scaleX(0.920);">Actions</div>
<svg width="760" height="405" style="left:0;top:0"><path d="M749.7 45.4 L752.3 45.4 L751 47.0 Z" fill="#ddd"/><rect x="753" y="44.1" width="4.2" height="4.5" fill="#8a8a8a"/><path d="M753 45.6 H757.2 M753 47.1 H757.2" stroke="#555" stroke-width="0.5"/></svg>
<div class="a" style="left:635px;top:51px;width:116px;height:171px;background:#2c2c2c"></div>
<div class="a" style="left:751px;top:51px;width:9px;height:171px;background:#262626;border-left:1px solid #1e1e1e"></div>
<div class="a" style="left:635px;top:51px;width:116px;height:16.5px;background:#303030"></div>
<div class="a" style="left:635px;top:67.5px;width:116px;height:0.8px;background:#222"></div>
<svg width="760" height="405" style="left:0;top:0"><path d="M638.8 61.6 L644.6 56.4 M640.6 63.2 L646.2 58.2" stroke="#e8e8e8" stroke-width="1.4" stroke-linecap="round"/></svg>
<svg width="760" height="405" style="left:0;top:0"><g transform="translate(649.6 53.5) scale(1.018 0.923)"><rect x="0" y="0" width="17" height="13" fill="#4a3210" stroke="#0c0c0c" stroke-width="0.8"/><path d="M0.5 0.5 H6 Q3 3 0.5 2.5 Z M16.5 9 V12.5 H14 Z" fill="#b88a30"/><path d="M9 1 Q11 0.5 12 2 L10 6 Q9 7 8 6.5 Z" fill="#a87818"/><path d="M1 4 Q5 1 9 3 L8.5 5 Q5 3.5 1.5 6 Z" fill="#e9b52e"/><path d="M2 9 Q6 6 11 7 L12 4 Q13 2 15.5 1.5 L14 5 Q13 8.5 9 9.5 Q5 10 2.5 12 Z" fill="#d9a020"/><path d="M5 2 L7.5 11 L6.2 11.5 L3.8 2.5 Z" fill="#f3d060"/><path d="M12.5 8 Q14.5 6 16 7 L13.5 12 L11.8 11.5 Z" fill="#f6e08a"/><path d="M1 11 Q3 10.5 4 12.5 L1 12.5 Z" fill="#c8c0a0"/></g></svg>
<div class="t" style="left:670.40px;top:57.00px;font-size:6.5px;color:#dcdcdc;transform:scaleX(0.843);">IMG_1210.jpg</div>
<div class="a" style="left:635px;top:68.2px;width:116px;height:12.4px;background:#303030"></div>
<div class="a" style="left:635px;top:80.60000000000001px;width:116px;height:0.8px;background:#232323"></div>
<div class="a" style="left:638.3px;top:72.2px;width:6.5px;height:6px;border:1px solid #3a3a3a"></div>
<svg width="760" height="405" style="left:0;top:0"><path d="M653.1 71.4 H659 L661.1 73.4 V80.2 H653.1 Z" fill="#9a9a9a"/><path d="M654.3 75.2 H660 M654.3 77.2 H660 M654.3 79.2 H660" stroke="#5a5a5a" stroke-width="0.6"/></svg>
<div class="t" style="left:668.30px;top:72.00px;font-size:6.5px;color:#d8d8d8;transform:scaleX(0.818);">Open</div>
<div class="a" style="left:635px;top:81.6px;width:116px;height:12.4px;background:#303030"></div>
<div class="a" style="left:635px;top:94.0px;width:116px;height:0.8px;background:#232323"></div>
<div class="a" style="left:638.3px;top:85.6px;width:6.5px;height:6px;border:1px solid #3a3a3a"></div>
<svg width="760" height="405" style="left:0;top:0"><path d="M653.1 84.8 H659 L661.1 86.8 V93.6 H653.1 Z" fill="#d8d8d8"/><path d="M654.3 88.6 H660 M654.3 90.6 H660 M654.3 92.6 H660" stroke="#5a5a5a" stroke-width="0.6"/></svg>
<div class="t" style="left:668.30px;top:86.00px;font-size:6.5px;color:#d8d8d8;transform:scaleX(0.821);">Image Size</div>
<div class="a" style="left:635px;top:94.8px;width:116px;height:12.4px;background:#4b5573"></div>
<div class="a" style="left:635px;top:107.2px;width:116px;height:0.8px;background:#232323"></div>
<div class="a" style="left:638.3px;top:98.8px;width:6.5px;height:6px;border:1px solid #5a6380"></div>
<svg width="760" height="405" style="left:0;top:0"><path d="M653.1 98.0 H659 L661.1 100.0 V106.8 H653.1 Z" fill="#b8bccb"/><path d="M654.3 101.8 H660 M654.3 103.8 H660 M654.3 105.8 H660" stroke="#5a5a5a" stroke-width="0.6"/></svg>
<div class="t" style="left:668.30px;top:99.00px;font-size:6.5px;color:#e4e4e4;transform:scaleX(0.820);">New Gradient Fill Layer</div>
<div class="a" style="left:635px;top:107.6px;width:116px;height:12.4px;background:#303030"></div>
<div class="a" style="left:635px;top:120.0px;width:116px;height:0.8px;background:#232323"></div>
<div class="a" style="left:638.3px;top:111.6px;width:6.5px;height:6px;border:1px solid #3a3a3a"></div>
<svg width="760" height="405" style="left:0;top:0"><path d="M653.1 110.8 H659 L661.1 112.8 V119.6 H653.1 Z" fill="#5e5e5e"/><path d="M654.3 114.6 H660 M654.3 116.6 H660 M654.3 118.6 H660" stroke="#3a3a3a" stroke-width="0.6"/></svg>
<div class="t" style="left:668.60px;top:111.00px;font-size:6.5px;color:#5c5c5c;transform:scaleX(0.850);font-style:italic;">Blending Change</div>
<div class="a" style="left:635px;top:120.6px;width:116px;height:12.4px;background:#303030"></div>
<div class="a" style="left:635px;top:133.0px;width:116px;height:0.8px;background:#232323"></div>
<div class="a" style="left:638.3px;top:124.6px;width:6.5px;height:6px;border:1px solid #3a3a3a"></div>
<svg width="760" height="405" style="left:0;top:0"><path d="M653.1 123.8 H659 L661.1 125.8 V132.6 H653.1 Z" fill="#5e5e5e"/><path d="M654.3 127.6 H660 M654.3 129.6 H660 M654.3 131.6 H660" stroke="#3a3a3a" stroke-width="0.6"/></svg>
<div class="t" style="left:668.60px;top:124.00px;font-size:6.5px;color:#5c5c5c;transform:scaleX(0.843);font-style:italic;">Stamp Visible</div>
<div class="a" style="left:635px;top:133.6px;width:116px;height:12.4px;background:#303030"></div>
<div class="a" style="left:635px;top:146.0px;width:116px;height:0.8px;background:#232323"></div>
<div class="a" style="left:638.3px;top:137.6px;width:6.5px;height:6px;border:1px solid #3a3a3a"></div>
<svg width="760" height="405" style="left:0;top:0"><path d="M653.1 136.79999999999998 H659 L661.1 138.79999999999998 V145.6 H653.1 Z" fill="#5e5e5e"/><path d="M654.3 140.6 H660 M654.3 142.6 H660 M654.3 144.6 H660" stroke="#3a3a3a" stroke-width="0.6"/></svg>
<div class="t" style="left:668.60px;top:137.00px;font-size:6.5px;color:#5c5c5c;transform:scaleX(0.828);font-style:italic;">Blur Gallery</div>
<div class="a" style="left:635px;top:146.2px;width:116px;height:0.8px;background:#262626"></div>
<div class="a" style="left:635px;top:221.2px;width:125px;height:10px;background:#2f2f2f;border-top:1px solid #3a3a3a"></div>
<svg width="760" height="405" style="left:0;top:0"><rect x="703.5" y="225.5" width="6.5" height="5" fill="#ddd"/><path d="M702.4 227.5 L705.5 225 L705.5 230 Z" fill="#ddd"/><rect x="706" y="223.8" width="3" height="3" fill="#777"/><rect x="719.4" y="225.2" width="8.9" height="5.4" rx="1" fill="#ddd"/><rect x="722" y="224" width="3.6" height="1.6" fill="#ddd"/><circle cx="723.8" cy="227.9" r="1.6" fill="#333"/><rect x="737.6" y="225.5" width="5.4" height="5.2" rx="0.8" fill="#aaa"/><rect x="737" y="224.2" width="6.5" height="1" fill="#aaa"/><path d="M752 230 L758 224.5 M755 230 L758 227.2" stroke="#444" stroke-width="0.6"/></svg>
<div class="a" style="left:635px;top:231.3px;width:125px;height:2.8px;background:#1c1c1c"></div>
<div class="a" style="left:635px;top:234.2px;width:125px;height:9px;background:#232323"></div>
<div class="a" style="left:636px;top:234.2px;width:25.5px;height:9px;background:#292929"></div>
<div class="a" style="left:662px;top:234.2px;width:18px;height:9px;background:#292929"></div>
<div class="a" style="left:680.4px;top:234.2px;width:31.6px;height:9px;background:#363636"></div>
<div class="a" style="left:712.5px;top:234.2px;width:32px;height:9px;background:#292929"></div>
<div class="t" style="left:638.90px;top:236.00px;font-size:6.5px;color:#a0a0a0;transform:scaleX(0.882);">Adjustm</div>
<div class="t" style="left:663.30px;top:236.00px;font-size:6.5px;color:#a0a0a0;transform:scaleX(0.887);">Styles</div>
<div class="t" style="left:682.50px;top:236.00px;font-size:6.5px;color:#e8e8e8;transform:scaleX(0.939);font-weight:bold;">Character</div>
<div class="t" style="left:715.70px;top:236.00px;font-size:6.5px;color:#a0a0a0;transform:scaleX(0.908);">Paragraj</div>
<svg width="760" height="405" style="left:0;top:0"><path d="M749.7 237.4 L752.3 237.4 L751 239.0 Z" fill="#ddd"/><rect x="753" y="236.1" width="4.2" height="4.5" fill="#8a8a8a"/><path d="M753 237.6 H757.2 M753 239.1 H757.2" stroke="#555" stroke-width="0.5"/></svg>
<div class="a" style="left:635px;top:243.1px;width:125px;height:2.3px;background:#1c1c1c"></div>
<div class="a" style="left:635px;top:245.4px;width:125px;height:9.6px;background:#232323"></div>
<div class="a" style="left:636.7px;top:245.4px;width:22.2px;height:9.6px;background:#363636"></div>
<div class="a" style="left:659.5px;top:245.4px;width:34px;height:9.6px;background:#292929"></div>
<div class="a" style="left:694px;top:245.4px;width:24px;height:9.6px;background:#292929"></div>
<div class="t" style="left:639.00px;top:248.00px;font-size:6.5px;color:#e8e8e8;transform:scaleX(0.763);font-weight:bold;">Layers</div>
<div class="t" style="left:663.00px;top:248.00px;font-size:6.5px;color:#a0a0a0;transform:scaleX(0.878);">Properties</div>
<div class="t" style="left:698.00px;top:248.00px;font-size:6.5px;color:#a0a0a0;transform:scaleX(1.015);">Info</div>
<svg width="760" height="405" style="left:0;top:0"><path d="M749.7 249.1 L752.3 249.1 L751 250.7 Z" fill="#ddd"/><rect x="753" y="247.79999999999998" width="4.2" height="4.5" fill="#8a8a8a"/><path d="M753 249.29999999999998 H757.2 M753 250.79999999999998 H757.2" stroke="#555" stroke-width="0.5"/></svg>
<div class="a" style="left:635px;top:255px;width:125px;height:150px;background:#303030"></div>
<div class="a" style="left:751px;top:302px;width:9px;height:93px;background:#2a2a2a;border-left:1px solid #222"></div>
<div class="a" style="left:638.9px;top:258px;width:37.1px;height:9.6px;background:#2b2b2b;border:1px solid #262626;border-radius:1.5px"></div>
<svg width="760" height="405" style="left:0;top:0"><circle cx="643.7" cy="261.8" r="2" fill="none" stroke="#888" stroke-width="0.8"/><path d="M642.3 263.3 L640.3 265.5" stroke="#888" stroke-width="0.9"/><path d="M671 261.5 L672.3 260 L673.6 261.5 M671 264.2 L672.3 265.7 L673.6 264.2" fill="none" stroke="#888" stroke-width="0.6"/><rect x="682.6" y="259" width="8" height="7" fill="none" stroke="#777" stroke-width="0.8"/><path d="M683.5 265 L686 262 L688 264 L690 261.5" fill="none" stroke="#777" stroke-width="0.7"/><circle cx="700" cy="262.3" r="3" fill="#6a6a6a"/><path d="M698 264.5 L702 260" stroke="#303030" stroke-width="0.9"/><path d="M710.5 259.2 H716.5 M713.5 259.2 V266" stroke="#777" stroke-width="1"/><rect x="724.5" y="259.5" width="6" height="6" fill="none" stroke="#777" stroke-width="0.9"/><rect x="723.8" y="258.8" width="1.6" height="1.6" fill="#777"/><rect x="729.8" y="258.8" width="1.6" height="1.6" fill="#777"/><rect x="723.8" y="264.8" width="1.6" height="1.6" fill="#777"/><rect x="729.8" y="264.8" width="1.6" height="1.6" fill="#777"/><path d="M737.5 266 V261.5 L740 259 L744 259 L744 266 Z" fill="#777"/><rect x="752" y="258" width="3.7" height="3.5" fill="#555"/><rect x="752" y="262" width="3.7" height="4.2" fill="#3e3e3e"/></svg>
<div class="t" style="left:649.00px;top:260.00px;font-size:6.5px;color:#8a8a8a;transform:scaleX(0.922);">Kind</div>
<div class="a" style="left:638.9px;top:273.3px;width:59.6px;height:9.3px;background:#2b2b2b;border:1px solid #262626;border-radius:1.5px"></div>
<div class="t" style="left:642.00px;top:276.00px;font-size:6.5px;color:#7c7c7c;transform:scaleX(0.859);">Normal</div>
<svg width="760" height="405" style="left:0;top:0"><path d="M693.5 276.6 L694.8 275.4 L696.1 276.6 M693.5 279.4 L694.8 280.6 L696.1 279.4" fill="none" stroke="#888" stroke-width="0.6"/></svg>
<div class="t" style="left:703.00px;top:276.00px;font-size:6.5px;color:#7c7c7c;transform:scaleX(0.881);">Opacity:</div>
<div class="a" style="left:727px;top:273.3px;width:22px;height:9.3px;background:#2b2b2b;border:1px solid #262626"></div>
<div class="t" style="left:730.00px;top:276.00px;font-size:6.5px;color:#707070;transform:scaleX(0.902);">100%</div>
<div class="a" style="left:749px;top:273.3px;width:6.7px;height:9.3px;background:#3a3a3a;border:1px solid #262626"></div>
<svg width="760" height="405" style="left:0;top:0"><path d="M751 277.2 L752.3 278.6 L753.6 277.2" fill="none" stroke="#bbb" stroke-width="0.7"/></svg>
<div class="t" style="left:639.00px;top:291.00px;font-size:6.5px;color:#8a8a8a;transform:scaleX(0.837);">Lock:</div>
<svg width="760" height="405" style="left:0;top:0"><rect x="657.5" y="290.5" width="6" height="6" fill="none" stroke="#8a8a8a" stroke-width="0.8"/><path d="M657.5 293.5 H663.5 M660.5 290.5 V296.5" stroke="#8a8a8a" stroke-width="0.8"/><path d="M668.5 297.5 Q670 295 671 294.5 L676 289.5" stroke="#9a9a9a" stroke-width="1.1" fill="none"/><path d="M683.5 290 V297 M680 293.5 H687" stroke="#8a8a8a" stroke-width="0.9"/><path d="M682.3 291 L683.5 289.6 L684.7 291 M682.3 296 L683.5 297.4 L684.7 296 M681 292.3 L679.6 293.5 L681 294.7 M686 292.3 L687.4 293.5 L686 294.7" fill="none" stroke="#8a8a8a" stroke-width="0.6"/><rect x="693.5" y="293" width="5.4" height="4.3" fill="#8a8a8a"/><path d="M694.6 293 V291.6 Q696.2 289.5 697.8 291.6 V293" fill="none" stroke="#8a8a8a" stroke-width="0.8"/></svg>
<div class="t" style="left:716.00px;top:291.00px;font-size:6.5px;color:#7c7c7c;transform:scaleX(0.692);">Fill:</div>
<div class="a" style="left:727px;top:289px;width:22px;height:9.3px;background:#2b2b2b;border:1px solid #262626"></div>
<div class="t" style="left:730.00px;top:291.00px;font-size:6.5px;color:#707070;transform:scaleX(0.902);">100%</div>
<div class="a" style="left:749px;top:289px;width:6.7px;height:9.3px;background:#3a3a3a;border:1px solid #262626"></div>
<svg width="760" height="405" style="left:0;top:0"><path d="M751 293 L752.3 294.4 L753.6 293" fill="none" stroke="#bbb" stroke-width="0.7"/></svg>
<div class="a" style="left:635px;top:301px;width:116px;height:94px;background:#2e2e2e"></div>
<div class="a" style="left:635px;top:301px;width:116px;height:0.8px;background:#232323"></div>
<div class="a" style="left:652px;top:302px;width:99px;height:16.7px;background:#4b5573"></div>
<div class="a" style="left:635px;top:318.7px;width:116px;height:0.8px;background:#262626"></div>
<div class="a" style="left:635px;top:335.4px;width:116px;height:0.8px;background:#262626"></div>
<svg width="760" height="405" style="left:0;top:0"><path d="M640 310.3 Q643.8 306.5 647.6 310.3 Q643.8 314.1 640 310.3 Z" fill="none" stroke="#cfcfcf" stroke-width="0.8"/><circle cx="643.8" cy="310.3" r="1.3" fill="#cfcfcf"/><path d="M640 327.8 Q643.8 324 647.6 327.8 Q643.8 331.6 640 327.8 Z" fill="none" stroke="#cfcfcf" stroke-width="0.8"/><circle cx="643.8" cy="327.8" r="1.3" fill="#cfcfcf"/><defs><linearGradient id="lg1" x1="0" y1="0" x2="1" y2="1"><stop offset="0.1" stop-color="#0a0a0a"/><stop offset="0.5" stop-color="#707070"/><stop offset="0.95" stop-color="#f4f4f4"/></linearGradient></defs><rect x="653.2" y="303" width="20" height="14.8" fill="#263050" stroke="#8a93b0" stroke-width="0.6"/><path d="M653.2 306 V303 H656.5 M669.9 303 H673.2 V306 M673.2 314.8 V317.8 H669.9 M656.5 317.8 H653.2 V314.8" fill="none" stroke="#f0f0f0" stroke-width="0.9"/><rect x="655.5" y="304.6" width="15.5" height="11.6" fill="#2a3350" stroke="#1a2038" stroke-width="0.6"/><rect x="658.4" y="305.4" width="9.9" height="9.9" fill="url(#lg1)"/><circle cx="675.9" cy="309" r="1.4" fill="none" stroke="#c8c8c8" stroke-width="0.7"/><circle cx="675.9" cy="312" r="1.4" fill="none" stroke="#c8c8c8" stroke-width="0.7"/><rect x="680.1" y="304" width="18.3" height="12.8" fill="#fff" stroke="#2a2a3a" stroke-width="0.8"/><rect x="735.3" y="327" width="7" height="5" rx="0.6" fill="none" stroke="#bbb" stroke-width="0.8"/><path d="M736.8 327 V325.5 Q738.8 322.5 740.8 325.5 V327" fill="none" stroke="#bbb" stroke-width="0.8"/></svg>
<svg width="760" height="405" style="left:0;top:0"><g transform="translate(654.4 320.7) scale(1.018 0.992)"><rect x="0" y="0" width="17" height="13" fill="#4a3210" stroke="#0c0c0c" stroke-width="0.8"/><path d="M0.5 0.5 H6 Q3 3 0.5 2.5 Z M16.5 9 V12.5 H14 Z" fill="#b88a30"/><path d="M9 1 Q11 0.5 12 2 L10 6 Q9 7 8 6.5 Z" fill="#a87818"/><path d="M1 4 Q5 1 9 3 L8.5 5 Q5 3.5 1.5 6 Z" fill="#e9b52e"/><path d="M2 9 Q6 6 11 7 L12 4 Q13 2 15.5 1.5 L14 5 Q13 8.5 9 9.5 Q5 10 2.5 12 Z" fill="#d9a020"/><path d="M5 2 L7.5 11 L6.2 11.5 L3.8 2.5 Z" fill="#f3d060"/><path d="M12.5 8 Q14.5 6 16 7 L13.5 12 L11.8 11.5 Z" fill="#f6e08a"/><path d="M1 11 Q3 10.5 4 12.5 L1 12.5 Z" fill="#c8c0a0"/></g></svg>
<div class="t" style="left:704.00px;top:308.00px;font-size:6.5px;color:#e6e6e6;transform:scaleX(0.816);">Gradient Fill 1</div>
<div class="t" style="left:678.20px;top:325.00px;font-size:6.5px;color:#d8d8d8;transform:scaleX(0.773);font-style:italic;">Background</div>
<div class="a" style="left:635px;top:393px;width:125px;height:12px;background:#2a2a2a;border-top:1px solid #222"></div>
<svg width="760" height="405" style="left:0;top:0" fill="none" stroke="#9a9a9a" stroke-width="0.9"><ellipse cx="648.5" cy="398.5" rx="2.2" ry="1.6"/><ellipse cx="652" cy="398.5" rx="2.2" ry="1.6"/><text x="662.5" y="401.5" font-size="7" font-style="italic" fill="#9a9a9a" stroke="none" font-family="Liberation Serif">fx</text><rect x="677" y="395.5" width="7" height="6" fill="#9a9a9a" stroke="none"/><circle cx="680.5" cy="398.5" r="1.6" fill="#333" stroke="none"/><circle cx="695" cy="398.5" r="3" fill="#9a9a9a" stroke="none"/><path d="M693 400.5 L697 396.5" stroke="#333"/><path d="M707 396 H710 L711 397 H714 V401.5 H707 Z" fill="#9a9a9a" stroke="none"/><rect x="722.5" y="396" width="5.5" height="6" fill="#9a9a9a" stroke="none"/><rect x="725.5" y="395" width="2.5" height="2.5" fill="#555" stroke="none"/><rect x="738" y="397" width="5" height="5" fill="#9a9a9a" stroke="none"/><rect x="737.2" y="395.8" width="6.6" height="0.9" fill="#9a9a9a" stroke="none"/></svg>
<div class="a" style="left:22px;top:395px;width:612px;height:10px;background:#1e1e1e"></div>
<div class="a" style="left:49.5px;top:395.2px;width:115px;height:9px;background:#2c2c2c"></div>
<div class="a" style="left:156.8px;top:395.2px;width:7.9px;height:9px;background:#363636"></div>
<div class="t" style="left:29.00px;top:397.00px;font-size:6.3px;color:#e6e6e6;transform:scaleX(0.881);">100%</div>
<svg width="760" height="405" style="left:0;top:0"><circle cx="56" cy="399.7" r="3.9" fill="#cfcfcf"/><path d="M55.6 397.3 V400.2 H58" fill="none" stroke="#333" stroke-width="0.8"/><path d="M158.6 396.8 L163 399.8 L158.6 402.8 Z" fill="#e0e0e0"/></svg>
<div class="t" style="left:87.40px;top:397.00px;font-size:6.3px;color:#d8d8d8;transform:scaleX(0.868);">Doc: 1,10M/1,10M</div>
<div class="a" style="left:117px;top:84px;width:423px;height:281px;background:linear-gradient(180deg,#0a6bd2 0%,#0c72cc 30%,#1386b6 65%,#1895a4 100%)"></div>
<div class="a" style="left:133.6px;top:108.3px;width:180.6px;height:128px;background:#5db0c1;border:1px solid #4a93a3"></div>
<div class="a" style="left:138.6px;top:126px;width:170.7px;height:105.3px;background:#efefef;border-left:1px solid #fafafa;border-top:1px solid #f8f8f8"></div>
<div class="t" style="left:201.50px;top:114.00px;font-size:8.2px;color:#2c4954;">Gradient Fill</div>
<div class="a" style="left:292.6px;top:109.1px;width:17.3px;height:10.7px;background:#c94f4f"></div>
<svg width="760" height="405" style="left:0;top:0"><path d="M299.3 112.4 L303.2 116.3 M303.2 112.4 L299.3 116.3" stroke="#fff" stroke-width="1.2"/></svg>
<div class="t" style="left:144.70px;top:134.00px;font-size:7.2px;color:#141414;transform:scaleX(0.939);">Gradient:</div>
<div class="a" style="left:174.9px;top:131.1px;width:70.7px;height:12.8px;background:#fff;border:1px solid #5a5a5a;box-shadow:inset 1px 1px 0 #8a8a8a"></div>
<div class="a" style="left:176.2px;top:132.4px;width:59.3px;height:10.2px;background:linear-gradient(90deg,#1593a6,#0c72cc 70%,#0a6ad8)"></div>
<div class="a" style="left:235.6px;top:132.4px;width:1px;height:10.2px;background:#444"></div>
<svg width="760" height="405" style="left:0;top:0"><path d="M238 135.6 L242.4 135.6 L240.2 138.8 Z" fill="#111"/></svg>
<div class="a" style="left:261px;top:131.3px;width:42.10000000000002px;height:10.5px;background:linear-gradient(#f0f0f0,#e3e3e3);border:1px solid #3d9ae0"></div>
<div class="t" style="left:277.00px;top:133.00px;font-size:7.2px;color:#1e1e1e;transform:scaleX(1.009);">OK</div>
<div class="a" style="left:261.1px;top:147.7px;width:42.099999999999966px;height:9.5px;background:linear-gradient(#f0f0f0,#e3e3e3);border:1px solid #acacac"></div>
<div class="t" style="left:271.80px;top:149.00px;font-size:7.2px;color:#1e1e1e;transform:scaleX(0.901);">Cancel</div>
<div class="t" style="left:154.80px;top:152.00px;font-size:7.2px;color:#141414;transform:scaleX(0.966);">Style:</div>
<div class="a" style="left:174.6px;top:149.5px;width:47.2px;height:11.9px;background:#fff;border:1px solid #c4c4c4;border-radius:1.5px"></div>
<div class="t" style="left:178.50px;top:152.00px;font-size:7.2px;color:#141414;transform:scaleX(0.889);">Linear</div>
<svg width="760" height="405" style="left:0;top:0"><path d="M215.2 154.2 L217 156.2 L218.8 154.2" fill="none" stroke="#333" stroke-width="0.9"/></svg>
<div class="t" style="left:153.00px;top:172.00px;font-size:7.2px;color:#141414;transform:scaleX(0.941);">Angle:</div>
<svg width="760" height="405" style="left:0;top:0"><defs><radialGradient id="dial" cx="0.5" cy="0.4" r="0.6"><stop offset="0" stop-color="#f6f6f6"/><stop offset="1" stop-color="#dcdcdc"/></radialGradient></defs><circle cx="184.8" cy="175.9" r="9.4" fill="url(#dial)" stroke="#9a9a9a" stroke-width="0.8"/><path d="M184.8 167.2 V175.8" stroke="#333" stroke-width="0.8"/><circle cx="184.8" cy="175.9" r="0.9" fill="#222"/></svg>
<div class="a" style="left:199.5px;top:170.3px;width:46.2px;height:11.2px;background:#fff;border:1px solid #c4c4c4"></div>
<div class="t" style="left:202.80px;top:172.00px;font-size:7.2px;color:#141414;transform:scaleX(0.887);">90</div>
<svg width="760" height="405" style="left:0;top:0"><circle cx="249.8" cy="174" r="1.1" fill="none" stroke="#555" stroke-width="0.7"/></svg>
<div class="t" style="left:154.80px;top:193.00px;font-size:7.2px;color:#141414;transform:scaleX(0.875);">Scale:</div>
<div class="a" style="left:174.3px;top:190.6px;width:33.8px;height:11.7px;background:#fff;border:1px solid #c4c4c4"></div>
<div class="a" style="left:196.8px;top:190.6px;width:11.3px;height:11.7px;background:#ececec;border:1px solid #c4c4c4"></div>
<svg width="760" height="405" style="left:0;top:0"><path d="M201 194.9 L203 196.4 L201 197.9 Z" fill="#222"/></svg>
<div class="t" style="left:177.70px;top:193.00px;font-size:7.2px;color:#141414;transform:scaleX(0.974);">100</div>
<div class="t" style="left:211.00px;top:193.00px;font-size:7.2px;color:#141414;transform:scaleX(0.968);">%</div>
<div class="a" style="left:174.6px;top:207.8px;width:6.8px;height:6.8px;background:#fff;border:1px solid #8e8e8e"></div>
<div class="t" style="left:183.80px;top:208.00px;font-size:7.2px;color:#141414;transform:scaleX(0.877);">Reverse</div>
<div class="a" style="left:218.3px;top:207.8px;width:6.8px;height:6.8px;background:#fff;border:1px solid #8e8e8e"></div>
<div class="t" style="left:227.20px;top:208.00px;font-size:7.2px;color:#141414;transform:scaleX(0.927);">Dither</div>
<div class="a" style="left:174.6px;top:219.2px;width:6.8px;height:6.8px;background:#fff;border:1px solid #8e8e8e"></div>
<svg width="760" height="405" style="left:0;top:0"><path d="M175.9 222.6 L177.5 224.39999999999998 L180.4 220.2" fill="none" stroke="#111" stroke-width="1.1"/></svg>
<div class="t" style="left:183.80px;top:219.00px;font-size:7.2px;color:#141414;transform:scaleX(0.946);">Align with layer</div>
<div class="a" style="left:317.6px;top:108.4px;width:254px;height:278px;background:#5db0c1;border:1px solid #4a93a3"></div>
<div class="a" style="left:322px;top:125.7px;width:244px;height:255px;background:#efefef;border-left:1px solid #fafafa;border-top:1px solid #f8f8f8"></div>
<div class="t" style="left:415.90px;top:114.00px;font-size:8.2px;color:#2c4954;transform:scaleX(1.014);">Gradient Editor</div>
<div class="a" style="left:542.1px;top:108.7px;width:25.5px;height:11.3px;background:#c94f4f"></div>
<svg width="760" height="405" style="left:0;top:0"><path d="M552.8 112.4 L556.9 116.5 M556.9 112.4 L552.8 116.5" stroke="#fff" stroke-width="1.2"/><path d="M517.8 116 H522.6" stroke="#2c4954" stroke-width="0.9"/><rect x="532.4" y="113.2" width="5.4" height="3.8" fill="none" stroke="#2c4954" stroke-width="0.9"/><rect x="532.4" y="113" width="5.4" height="1.4" fill="#2c4954"/></svg>
<div class="a" style="left:327.8px;top:135.6px;width:180.7px;height:75.7px;border:1px solid #cfcfcf;box-shadow:1px 1px 0 #fff inset"></div>
<div class="a" style="left:337px;top:132px;width:28px;height:7px;background:#efefef"></div>
<div class="t" style="left:339.70px;top:132.00px;font-size:7.2px;color:#141414;transform:scaleX(0.942);">Presets</div>
<div class="a" style="left:487px;top:132px;width:14px;height:7px;background:#efefef"></div>
<svg width="760" height="405" style="left:0;top:0"><circle cx="492.6" cy="135.3" r="1.9" fill="none" stroke="#222" stroke-width="1.2"/><circle cx="497.4" cy="136.8" r="0.6" fill="#222"/></svg>
<div class="a" style="left:332.4px;top:142.8px;width:171px;height:64px;background:#c6c6c6;border:1px solid #a8a8a8"></div>
<div class="a" style="left:491.8px;top:143.6px;width:11.2px;height:62.5px;background:#f4f4f4;border-left:1px solid #dedede"></div>
<svg width="760" height="405" style="left:0;top:0"><path d="M495.5 149.8 L497.4 147.8 L499.3 149.8" fill="none" stroke="#888" stroke-width="0.8"/><path d="M495.5 200 L497.4 202 L499.3 200" fill="none" stroke="#888" stroke-width="0.8"/></svg>
<div class="a" style="left:334.3px;top:144.0px;width:17.06px;height:17.06px;background:#fff"></div>
<div class="a" style="left:351.96px;top:144.0px;width:17.06px;height:17.06px;background-image:linear-gradient(135deg,#fff 0%,rgba(255,255,255,0) 100%),linear-gradient(45deg,#ccc 25%,transparent 25%,transparent 75%,#ccc 75%),linear-gradient(45deg,#ccc 25%,transparent 25%,transparent 75%,#ccc 75%);background-color:#fff;background-size:100% 100%,4px 4px,4px 4px;background-position:0 0,0 0,2px 2px"></div>
<div class="a" style="left:369.62px;top:144.0px;width:17.06px;height:17.06px;background:linear-gradient(135deg,#000 20%,#fff 80%)"></div>
<div class="a" style="left:387.28px;top:144.0px;width:17.06px;height:17.06px;background:linear-gradient(135deg,#e0001a 25%,#0a5a10 85%)"></div>
<div class="a" style="left:404.94px;top:144.0px;width:17.06px;height:17.06px;background:linear-gradient(135deg,#2a0a70 15%,#ff7a00 90%)"></div>
<div class="a" style="left:422.6px;top:144.0px;width:17.06px;height:17.06px;background:linear-gradient(135deg,#0010a0 15%,#ff0000 55%,#ffee00 90%)"></div>
<div class="a" style="left:440.26px;top:144.0px;width:17.06px;height:17.06px;background:linear-gradient(135deg,#0010a0 30%,#ffee00 50%,#0010a0 70%)"></div>
<div class="a" style="left:457.92px;top:144.0px;width:17.06px;height:17.06px;background:linear-gradient(135deg,#ff6a00 15%,#ffff00 55%,#ff6000 95%)"></div>
<div class="a" style="left:334.3px;top:161.66px;width:17.06px;height:17.06px;background:linear-gradient(135deg,#6a0a80 10%,#0a6020 50%,#ff7000 85%)"></div>
<div class="a" style="left:351.96px;top:161.66px;width:17.06px;height:17.06px;background:linear-gradient(135deg,#ffe600 0%,#ffe600 22%,#7a1a90 32%,#7a1a90 45%,#ff7a00 55%,#ff7a00 68%,#102070 80%)"></div>
<div class="a" style="left:369.62px;top:161.66px;width:17.06px;height:17.06px;background:linear-gradient(135deg,#7a3010 10%,#f0c0a0 45%,#6a2a08 70%,#f8e0d0 95%)"></div>
<div class="a" style="left:387.28px;top:161.66px;width:17.06px;height:17.06px;background:linear-gradient(135deg,#2a70c0 10%,#f0f8ff 48%,#303030 52%,#f0b020 60%,#fff 90%)"></div>
<div class="a" style="left:404.94px;top:161.66px;width:17.06px;height:17.06px;background:linear-gradient(135deg,#ff0000 12%,#ff00ff 22%,#0000ff 35%,#00ffff 48%,#00ff00 60%,#ffff00 75%,#ff0000 88%)"></div>
<div class="a" style="left:422.6px;top:161.66px;width:17.06px;height:17.06px;background-image:linear-gradient(135deg,rgba(255,255,255,0) 10%,#ff0000 22%,#ffff00 35%,#00ff00 48%,#00ffff 60%,#0000ff 72%,#ff00ff 84%,rgba(255,255,255,0) 95%),linear-gradient(45deg,#ccc 25%,transparent 25%,transparent 75%,#ccc 75%),linear-gradient(45deg,#ccc 25%,transparent 25%,transparent 75%,#ccc 75%);background-color:#fff;background-size:100% 100%,4px 4px,4px 4px;background-position:0 0,0 0,2px 2px"></div>
<div class="a" style="left:440.26px;top:161.66px;width:17.06px;height:17.06px;background-image:repeating-linear-gradient(135deg,rgba(255,255,255,.9) 0 3px,rgba(255,255,255,0) 3px 5px),linear-gradient(45deg,#ccc 25%,transparent 25%,transparent 75%,#ccc 75%),linear-gradient(45deg,#ccc 25%,transparent 25%,transparent 75%,#ccc 75%);background-color:#fff;background-size:100% 100%,4px 4px,4px 4px;background-position:0 0,0 0,2px 2px"></div>
<div class="a" style="left:457.92px;top:161.66px;width:17.06px;height:17.06px;background-image:linear-gradient(45deg,#999 25%,transparent 25%,transparent 75%,#999 75%),linear-gradient(45deg,#999 25%,transparent 25%,transparent 75%,#999 75%);background-color:#eee;background-size:4px 4px;background-position:0 0,2px 2px"></div>
<div class="a" style="left:334.3px;top:179.32px;width:17.06px;height:17.06px;background-image:linear-gradient(135deg,rgba(255,255,255,.9) 0%,rgba(255,255,255,0) 100%),linear-gradient(45deg,#ccc 25%,transparent 25%,transparent 75%,#ccc 75%),linear-gradient(45deg,#ccc 25%,transparent 25%,transparent 75%,#ccc 75%);background-color:#fff;background-size:100% 100%,4px 4px,4px 4px;background-position:0 0,0 0,2px 2px"></div>
<div class="a" style="left:351.96px;top:179.32px;width:17.06px;height:17.06px;background:linear-gradient(180deg,#1593a6,#0a6ad8)"></div>
<div class="a" style="left:517.3px;top:135px;width:42.60000000000002px;height:9.900000000000006px;background:linear-gradient(#f0f0f0,#e3e3e3);border:1px solid #3d9ae0"></div>
<div class="t" style="left:534.00px;top:137.00px;font-size:7.2px;color:#1e1e1e;transform:scaleX(0.817);">OK</div>
<div class="a" style="left:517.4px;top:151.1px;width:42.60000000000002px;height:9.300000000000011px;background:linear-gradient(#f0f0f0,#e3e3e3);border:1px solid #acacac"></div>
<div class="t" style="left:527.50px;top:152.00px;font-size:7.2px;color:#1e1e1e;transform:scaleX(0.959);">Cancel</div>
<div class="a" style="left:517.4px;top:170.6px;width:42.60000000000002px;height:9.200000000000017px;background:linear-gradient(#f0f0f0,#e3e3e3);border:1px solid #acacac"></div>
<div class="t" style="left:527.00px;top:172.00px;font-size:7.2px;color:#1e1e1e;transform:scaleX(1.045);">Load...</div>
<div class="a" style="left:517.4px;top:186px;width:42.60000000000002px;height:9.599999999999994px;background:linear-gradient(#f0f0f0,#e3e3e3);border:1px solid #acacac"></div>
<div class="t" style="left:527.00px;top:188.00px;font-size:7.2px;color:#1e1e1e;transform:scaleX(1.026);">Save...</div>
<div class="t" style="left:328.20px;top:224.00px;font-size:7.2px;color:#141414;transform:scaleX(0.882);">Name:</div>
<div class="a" style="left:356.2px;top:221.6px;width:152.4px;height:10.9px;background:#fff;border:1px solid #c8c8c8"></div>
<div class="t" style="left:359.30px;top:224.00px;font-size:7.2px;color:#141414;transform:scaleX(0.897);">lomo</div>
<div class="a" style="left:517.1px;top:222.1px;width:42.799999999999955px;height:10.099999999999994px;background:linear-gradient(#f0f0f0,#e3e3e3);border:1px solid #acacac"></div>
<div class="t" style="left:531.10px;top:224.00px;font-size:7.2px;color:#1e1e1e;transform:scaleX(0.972);">New</div>
<div class="a" style="left:328.3px;top:245.4px;width:229.3px;height:122.6px;border:1px solid #cfcfcf"></div>
<div class="a" style="left:337px;top:243px;width:96px;height:8px;background:#efefef"></div>
<div class="t" style="left:346.10px;top:244.00px;font-size:7.2px;color:#141414;transform:scaleX(0.941);">Gradient Type:</div>
<div class="a" style="left:393.9px;top:241.5px;width:35.7px;height:12.5px;background:#fff;border:1px solid #c4c4c4;border-radius:1.5px"></div>
<div class="t" style="left:398.20px;top:244.00px;font-size:7.2px;color:#141414;transform:scaleX(0.824);">Solid</div>
<svg width="760" height="405" style="left:0;top:0"><path d="M422.5 247 L424.6 249.2 L426.7 247" fill="none" stroke="#333" stroke-width="0.9"/></svg>
<div class="t" style="left:333.70px;top:261.00px;font-size:7.2px;color:#141414;transform:scaleX(0.942);">Smoothness:</div>
<div class="a" style="left:375.6px;top:259.4px;width:29.6px;height:11.7px;background:#fff;border:1px solid #c4c4c4"></div>
<div class="a" style="left:392.8px;top:259.4px;width:12.4px;height:11.7px;background:#ececec;border:1px solid #c4c4c4"></div>
<svg width="760" height="405" style="left:0;top:0"><path d="M397.8 263.6 L399.8 265.1 L397.8 266.6 Z" fill="#222"/></svg>
<div class="t" style="left:378.80px;top:262.00px;font-size:7.2px;color:#141414;transform:scaleX(0.966);">100</div>
<div class="t" style="left:407.50px;top:261.00px;font-size:7.2px;color:#141414;transform:scaleX(1.093);">%</div>
<div class="a" style="left:336.8px;top:286.3px;width:214.3px;height:14.8px;background:linear-gradient(90deg,#1693a6 0%,#1189b0 40%,#0c74cc 75%,#0a6ad8 100%)"></div>
<svg width="760" height="405" style="left:0;top:0"><path d="M334.6 276.7 H339.8 V283 L337.2 285.6 L334.6 283 Z" fill="#fff" stroke="#444" stroke-width="0.6"/><rect x="335.3" y="277.4" width="3.8" height="3.8" fill="#000"/><path d="M546.8 276.7 H552.2 V283 L549.5 285.6 L546.8 283 Z" fill="#fff" stroke="#444" stroke-width="0.6"/><rect x="547.5" y="277.4" width="4" height="3.8" fill="#000"/><path d="M334.2 311.3 H340.4 V304.6 L337.3 301.9 L334.2 304.6 Z" fill="#fff" stroke="#555" stroke-width="0.6"/><rect x="334.9" y="306.3" width="4.8" height="4.3" fill="#1693a6"/><path d="M546.8 311.3 H553.2 V304.6 L550 301.9 L546.8 304.6 Z" fill="#fff" stroke="#555" stroke-width="0.6"/><rect x="547.5" y="306.3" width="5" height="4.3" fill="#0a6ad8"/></svg>
<div class="a" style="left:333.2px;top:320.4px;width:221.2px;height:43px;border:1px solid #cfcfcf"></div>
<div class="a" style="left:342px;top:317px;width:24px;height:7px;background:#efefef"></div>
<div class="t" style="left:345.70px;top:317.00px;font-size:7.2px;color:#141414;transform:scaleX(0.885);">Stops</div>
<div class="t" style="left:347.70px;top:331.00px;font-size:7.2px;color:#a4a4a4;transform:scaleX(0.939);">Opacity:</div>
<div class="a" style="left:375.7px;top:328px;width:29.7px;height:12.5px;background:#eeeeee;border:1px solid #d4d4d4"></div>
<div class="a" style="left:393.4px;top:328px;width:12px;height:12.5px;border-left:1px solid #d4d4d4"></div>
<div class="t" style="left:407.80px;top:331.00px;font-size:7.2px;color:#a4a4a4;transform:scaleX(0.890);">%</div>
<div class="t" style="left:355.70px;top:349.00px;font-size:7.2px;color:#a4a4a4;transform:scaleX(0.875);">Color:</div>
<div class="a" style="left:376.2px;top:347.3px;width:29.2px;height:10.4px;background:#ececec;border:1px solid #d4d4d4"></div>
<div class="a" style="left:407.4px;top:347.3px;width:8.5px;height:10.4px;background:#ececec;border:1px solid #d4d4d4"></div>
<svg width="760" height="405" style="left:0;top:0"><path d="M398.5 332.8 L400.5 334.3 L398.5 335.8 Z" fill="#333"/><path d="M410 349.2 L413.2 352.4 L410 355.6 Z" fill="#b0b0b0"/></svg>
<div class="t" style="left:426.10px;top:331.00px;font-size:7.2px;color:#a4a4a4;transform:scaleX(0.945);">Location:</div>
<div class="a" style="left:456.9px;top:329.9px;width:30.5px;height:10px;background:#eeeeee;border:1px solid #d8d8d8"></div>
<div class="t" style="left:490.60px;top:331.00px;font-size:7.2px;color:#a4a4a4;transform:scaleX(0.875);">%</div>
<div class="t" style="left:426.10px;top:349.00px;font-size:7.2px;color:#a4a4a4;transform:scaleX(0.945);">Location:</div>
<div class="a" style="left:456.9px;top:347.6px;width:30.5px;height:10px;background:#eeeeee;border:1px solid #d8d8d8"></div>
<div class="t" style="left:490.60px;top:349.00px;font-size:7.2px;color:#a4a4a4;transform:scaleX(0.875);">%</div>
<div class="a" style="left:507.5px;top:330px;width:42.10000000000002px;height:9.300000000000011px;background:#ececec;border:1px solid #d0d0d0"></div>
<div class="t" style="left:518.80px;top:331.00px;font-size:7.2px;color:#a0a0a0;transform:scaleX(0.937);">Delete</div>
<div class="a" style="left:507.5px;top:347.6px;width:42.10000000000002px;height:9.599999999999966px;background:#ececec;border:1px solid #d0d0d0"></div>
<div class="t" style="left:518.80px;top:349.00px;font-size:7.2px;color:#a0a0a0;transform:scaleX(0.937);">Delete</div>
<svg width="760" height="405" style="left:0;top:0"><path d="M562.4 379.4 L565.6 376.2 M564 379.4 L565.6 377.8" stroke="#aaa" stroke-width="0.6"/></svg>
<svg width="760" height="405" style="left:0;top:0"><polygon points="176.20,134.50 164.92,113.60 161.80,118.72 141.29,106.25 135.06,116.51 155.57,128.98 152.45,134.10" fill="#bd1a1c"/></svg>
<svg width="760" height="405" style="left:0;top:0"><polygon points="329.90,309.60 313.29,292.62 311.71,298.40 288.56,292.07 285.39,303.64 308.54,309.98 306.96,315.77" fill="#bd1a1c"/></svg>
<svg width="760" height="405" style="left:0;top:0"><polygon points="558.60,308.40 581.37,315.16 579.94,309.34 603.25,303.61 600.38,291.96 577.08,297.68 575.65,291.86" fill="#bd1a1c"/></svg>
</body></html>
